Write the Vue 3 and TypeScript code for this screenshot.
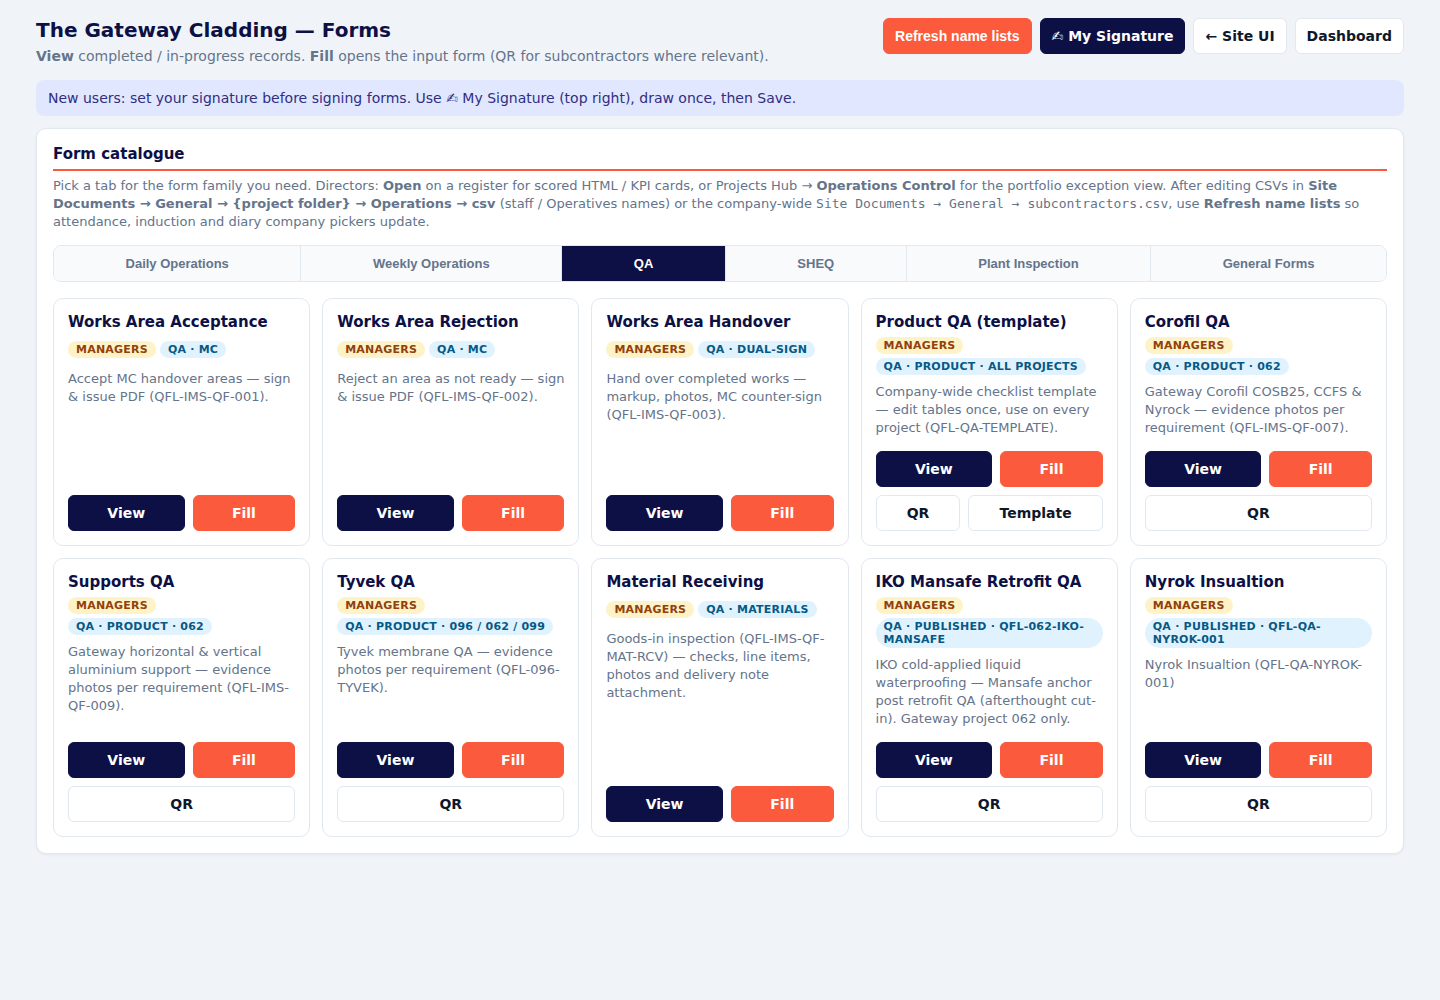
<script setup lang="ts">
import { ref } from 'vue'

interface FormCard {
  title: string
  tag: string
  text: string
  extras: string[]
}

const tabs: string[] = [
  'Daily Operations',
  'Weekly Operations',
  'QA',
  'SHEQ',
  'Plant Inspection',
  'General Forms',
]
const activeTab = ref('QA')

const cards: FormCard[] = [
  {
    title: 'Works Area Acceptance',
    tag: 'QA · MC',
    text: 'Accept MC handover areas — sign & issue PDF (QFL-IMS-QF-001).',
    extras: [],
  },
  {
    title: 'Works Area Rejection',
    tag: 'QA · MC',
    text: 'Reject an area as not ready — sign & issue PDF (QFL-IMS-QF-002).',
    extras: [],
  },
  {
    title: 'Works Area Handover',
    tag: 'QA · Dual-sign',
    text: 'Hand over completed works — markup, photos, MC counter-sign (QFL-IMS-QF-003).',
    extras: [],
  },
  {
    title: 'Product QA (template)',
    tag: 'QA · Product · All projects',
    text: 'Company-wide checklist template — edit tables once, use on every project (QFL-QA-TEMPLATE).',
    extras: ['QR', 'Template'],
  },
  {
    title: 'Corofil QA',
    tag: 'QA · Product · 062',
    text: 'Gateway Corofil COSB25, CCFS & Nyrock — evidence photos per requirement (QFL-IMS-QF-007).',
    extras: ['QR'],
  },
  {
    title: 'Supports QA',
    tag: 'QA · Product · 062',
    text: 'Gateway horizontal & vertical aluminium support — evidence photos per requirement (QFL-IMS-QF-009).',
    extras: ['QR'],
  },
  {
    title: 'Tyvek QA',
    tag: 'QA · Product · 096 / 062 / 099',
    text: 'Tyvek membrane QA — evidence photos per requirement (QFL-096-TYVEK).',
    extras: ['QR'],
  },
  {
    title: 'Material Receiving',
    tag: 'QA · Materials',
    text: 'Goods-in inspection (QFL-IMS-QF-MAT-RCV) — checks, line items, photos and delivery note attachment.',
    extras: [],
  },
  {
    title: 'IKO Mansafe Retrofit QA',
    tag: 'QA · Published · QFL-062-IKO-MANSAFE',
    text: 'IKO cold-applied liquid waterproofing — Mansafe anchor post retrofit QA (afterthought cut-in). Gateway project 062 only.',
    extras: ['QR'],
  },
  {
    title: 'Nyrok Insualtion',
    tag: 'QA · Published · QFL-QA-NYROK-001',
    text: 'Nyrok Insualtion (QFL-QA-NYROK-001)',
    extras: ['QR'],
  },
]
</script>

<template>
  <div class="page">
    <header class="top">
      <div>
        <h1>The Gateway Cladding — Forms</h1>
        <p class="sub">
          <strong>View</strong> completed / in-progress records. <strong>Fill</strong> opens the input form (QR for
          subcontractors where relevant).
        </p>
      </div>
      <nav class="top-actions">
        <button type="button" class="btn accent refresh">Refresh name lists</button>
        <a href="#signature" class="btn navy">✍ My Signature</a>
        <a href="#site" class="btn plain">← Site UI</a>
        <a href="#dashboard" class="btn plain">Dashboard</a>
      </nav>
    </header>

    <div class="notice">
      New users: set your signature before signing forms. Use ✍ My Signature (top right), draw once, then Save.
    </div>

    <main class="panel">
      <h2>Form catalogue</h2>
      <p class="intro">
        Pick a tab for the form family you need. Directors: <strong>Open</strong> on a register for scored HTML / KPI
        cards, or Projects Hub → <strong>Operations Control</strong> for the portfolio exception view. After editing
        CSVs in <strong>Site Documents → General → {project folder} → Operations → csv</strong> (staff / Operatives
        names) or the company-wide <code>Site Documents → General → subcontractors.csv</code>, use
        <strong>Refresh name lists</strong> so attendance, induction and diary company pickers update.
      </p>

      <div class="tabs" role="tablist">
        <button
          v-for="tab in tabs"
          :key="tab"
          type="button"
          role="tab"
          class="tab"
          :class="{ active: tab === activeTab }"
          :aria-selected="tab === activeTab"
          @click="activeTab = tab"
        >
          {{ tab }}
        </button>
      </div>

      <div class="grid">
        <article v-for="card in cards" :key="card.title" class="card">
          <h3>{{ card.title }}</h3>
          <div class="badges">
            <span class="badge role">Managers</span>
            <span class="badge kind">{{ card.tag }}</span>
          </div>
          <p class="desc">{{ card.text }}</p>
          <div class="actions">
            <div class="row">
              <a href="#view" class="btn navy">View</a>
              <a href="#fill" class="btn accent">Fill</a>
            </div>
            <div v-if="card.extras.length" class="row">
              <a v-for="extra in card.extras" :key="extra" href="#open" class="btn plain">{{ extra }}</a>
            </div>
          </div>
        </article>
      </div>
    </main>
  </div>
</template>

<style>
body {
  margin: 0;
  background: #f0f4f9;
}
</style>

<style scoped>
.page {
  padding: 18px 36px;
  font-family: 'DejaVu Sans', sans-serif;
  font-size: 14px;
  color: #0f172a;
}

.page * {
  box-sizing: border-box;
}

h1,
h2,
h3,
p {
  margin: 0;
}

.top {
  display: flex;
  justify-content: space-between;
  align-items: flex-start;
  gap: 16px;
  margin-bottom: 14px;
}

h1 {
  font-size: 20px;
  line-height: 24px;
  color: #0c1045;
}

.sub {
  margin-top: 4px;
  line-height: 20px;
  color: #64748b;
}

.top-actions {
  display: flex;
  gap: 8px;
}

.btn {
  display: flex;
  align-items: center;
  justify-content: center;
  height: 36px;
  padding: 0 11px;
  border: 1px solid transparent;
  border-radius: 6px;
  font-size: 14px;
  font-weight: 700;
  white-space: nowrap;
  text-decoration: none;
}

.btn.refresh {
  font-family: 'Liberation Sans', Arial, sans-serif;
  cursor: pointer;
}

.btn.navy {
  background: #0c1045;
  border-color: #0c1045;
  color: #fff;
}

.btn.accent {
  background: #fc5a3c;
  border-color: #fc5a3c;
  color: #fff;
}

.btn.plain {
  background: #fff;
  border-color: #e2e8f0;
  color: #0f172a;
}

.notice {
  margin-bottom: 12px;
  padding: 8px 12px;
  border-radius: 8px;
  background: #e0e7ff;
  color: #312e81;
  line-height: 20px;
}

.panel {
  padding: 16px;
  border: 1px solid #e2e8f0;
  border-radius: 10px;
  background: #fff;
  box-shadow: 0 1px 3px rgba(15, 23, 42, 0.06);
}

h2 {
  padding-bottom: 6px;
  border-bottom: 2px solid #fc5a3c;
  font-size: 15px;
  line-height: 18px;
  color: #0c1045;
}

.intro {
  margin: 6px 0 14px;
  font-size: 13px;
  line-height: 18px;
  color: #64748b;
}

code {
  font-family: 'DejaVu Sans Mono', monospace;
  font-size: 13px;
}

.tabs {
  display: flex;
  margin-bottom: 16px;
  border: 1px solid #e2e8f0;
  border-radius: 8px;
  overflow: hidden;
}

.tab {
  flex: 1 1 auto;
  height: 35px;
  padding: 0 12px;
  border: 0;
  border-right: 1px solid #e2e8f0;
  background: #f8fafc;
  font-family: 'Liberation Sans', Arial, sans-serif;
  font-size: 13px;
  font-weight: 700;
  color: #64748b;
  cursor: pointer;
}

.tab:last-child {
  border-right: 0;
}

.tab.active {
  background: #0c1045;
  color: #fff;
}

.grid {
  display: grid;
  grid-template-columns: repeat(auto-fill, minmax(240px, 1fr));
  gap: 12px;
}

.card {
  display: flex;
  flex-direction: column;
  padding: 14px;
  border: 1px solid #e2e8f0;
  border-radius: 10px;
  background: #fff;
}

h3 {
  font-size: 15px;
  line-height: 18px;
  color: #0c1045;
}

.badges {
  display: flex;
  flex-wrap: wrap;
  align-items: center;
  gap: 4px;
  min-height: 25px;
  margin: 6px 0 8px;
}

.badge {
  padding: 2px 8px;
  border-radius: 999px;
  font-size: 11px;
  line-height: 13px;
  font-weight: 700;
  letter-spacing: 0.02em;
  text-transform: uppercase;
}

.badge.role {
  background: #fef3c7;
  color: #92400e;
}

.badge.kind {
  background: #e0f2fe;
  color: #075985;
}

.desc {
  flex: 1;
  margin: 0 -4px 14px 0;
  font-size: 13px;
  line-height: 18px;
  color: #64748b;
}

.actions,
.row {
  display: flex;
  gap: 8px;
}

.actions {
  flex-direction: column;
}

.row .btn {
  flex: 1 1 auto;
}
</style>
